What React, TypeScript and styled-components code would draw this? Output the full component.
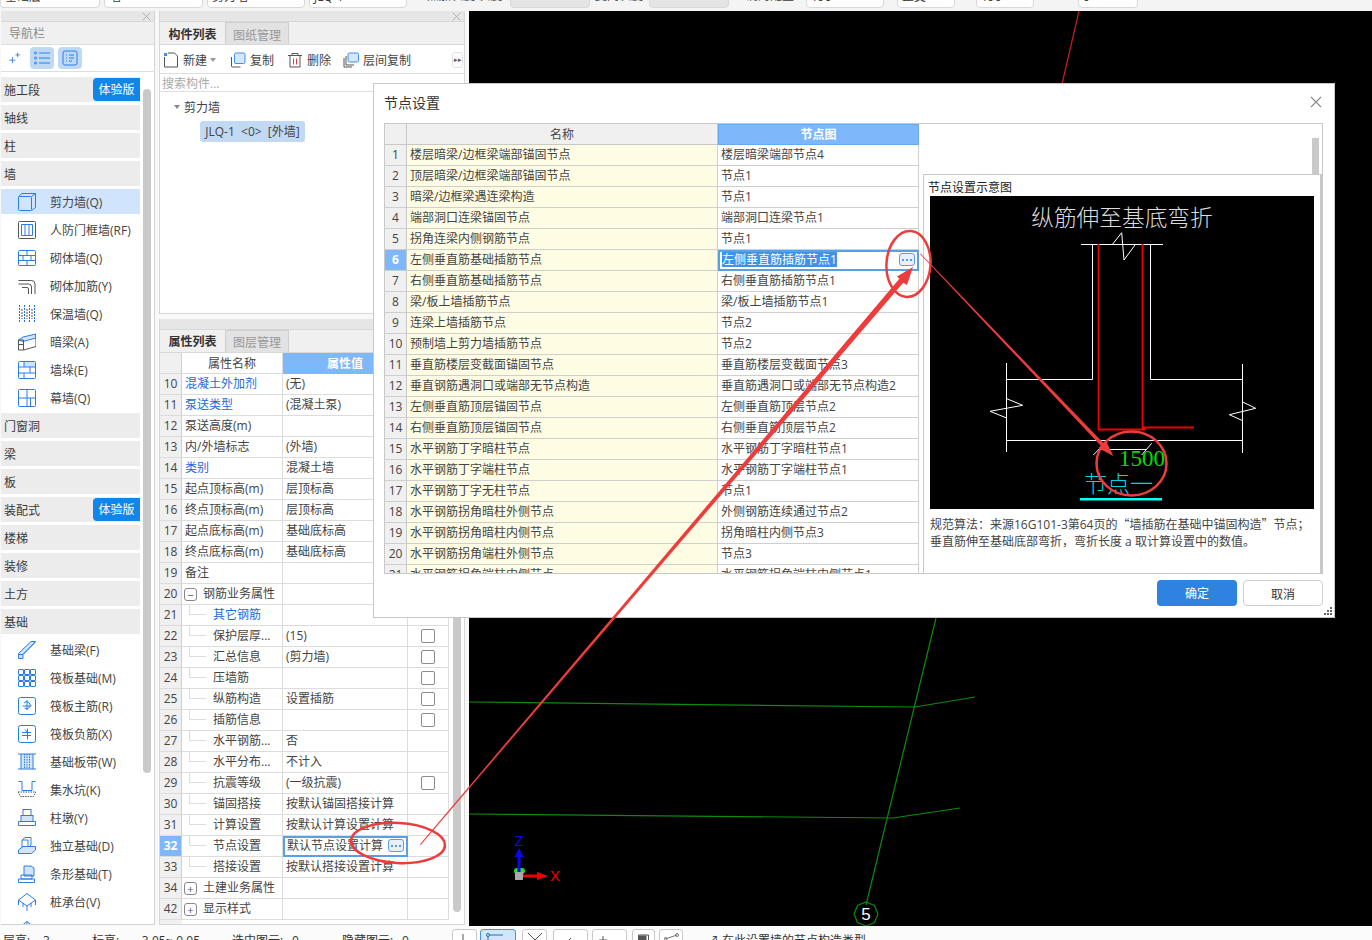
import React from "react";
import styled, { createGlobalStyle } from "styled-components";

const FONT = `"Open Sans","Noto Sans CJK SC",sans-serif`;
const BLUE = "#2a7de8";
const HEAD = "#7eb8fa";

const Global = createGlobalStyle`
  html, body { margin: 0; padding: 0; background: #f7f7f7; }
  * { box-sizing: border-box; }
  body { font-family: ${FONT}; font-size: 12px; color: #3a3a3a; }
`;

const Page = styled.div`
  position: relative; width: 1372px; height: 940px; overflow: hidden;
  display: flex; flex-direction: column; background: #f8f8f8;
`;

/* ---------- top bar ---------- */
const TopBar = styled.div`
  height: 11px; flex: none; overflow: hidden; display: flex; align-items: flex-end;
  gap: 4px; padding-bottom: 3px; background: #f4f4f4;
`;
const Field = styled.div<{ $w: number; $gray?: boolean; $ml?: number }>`
  flex: none; width: ${(p) => p.$w}px; height: 22px; margin-left: ${(p) => p.$ml ?? 0}px;
  border: 1px solid #d8d8d8; border-radius: 4px; background: ${(p) => (p.$gray ? "#e4e4e4" : "#fff")};
  padding: 0 4px; line-height: 20px; white-space: nowrap; overflow: hidden;
`;
const TopLabel = styled.div<{ $w: number; $ml?: number }>`
  flex: none; width: ${(p) => p.$w}px; height: 22px; line-height: 20px; margin-left: ${(p) => p.$ml ?? 0}px;
  white-space: nowrap; overflow: hidden;
`;

/* ---------- main ---------- */
const Main = styled.div`
  flex: none; height: 915px; display: flex; padding-left: 1px;
`;
const NavPanel = styled.div`
  flex: none; width: 154px; height: 914px; display: flex; flex-direction: column;
  background: #fff; border-right: 1px solid #d4d4d4; border-bottom: 1px solid #d4d4d4; overflow: hidden;
`;
const Grip = styled.div`
  flex: none; height: 11px; background: #e6e6e6; display: flex; justify-content: flex-end;
  align-items: center; padding-right: 3px; color: #a8a8a8; border-bottom: 1px solid #d8d8d8;
`;
const NavTitle = styled.div`
  flex: none; height: 22px; background: #f0f0f0; line-height: 24px; padding-left: 8px; color: #8a8a8a;
`;
const NavTools = styled.div`
  flex: none; height: 28px; display: flex; align-items: center; gap: 4px; padding-left: 7px;
  border-top: 1px solid #dedede; border-bottom: 1px solid #dedede;
`;
const ToolToggle = styled.div`
  width: 24px; height: 22px; border-radius: 4px; background: #bfd9f5;
  display: flex; align-items: center; justify-content: center;
`;
const NavBody = styled.div`
  flex: 1; min-height: 0; display: flex; padding-top: 5px;
`;
const NavList = styled.div`
  flex: none; width: 139px; display: flex; flex-direction: column; gap: 3px;
`;
const Section = styled.div`
  flex: none; height: 25px; background: #ececec; padding-left: 3px; line-height: 27px;
  display: flex; justify-content: space-between; color: #3a3a3a;
`;
const Trial = styled.div`
  width: 47px; height: 23px; margin-top: 1px; background: #0f86e8; color: #fff; text-align: center; line-height: 23px;
  border-radius: 4px 0 0 4px;
`;
const NavItem = styled.div<{ $on?: boolean }>`
  flex: none; height: 25px; display: flex; align-items: center; gap: 14px; padding-left: 17px;
  background: ${(p) => (p.$on ? "#d0e5fd" : "transparent")}; color: #444; white-space: nowrap;
`;
const NavThumb = styled.div`
  flex: none; width: 8px; height: 684px; margin: 12px 0 0 3px; background: #c9c9c9; border-radius: 4px;
`;

const Mid = styled.div`
  flex: none; width: 306px; margin-left: 4px; display: flex; flex-direction: column; gap: 5px;
`;
const MidPanel = styled.div<{ $h: number }>`
  flex: none; height: ${(p) => p.$h}px; display: flex; flex-direction: column; overflow: hidden;
  background: #fff; border: 1px solid #d8d8d8; border-top: none;
`;
const Tabs = styled.div`
  flex: none; height: 23px; display: flex; background: #f0f0f0; border-bottom: 1px solid #d8d8d8;
`;
const Tab = styled.div<{ $on?: boolean; $lh: number }>`
  width: ${(p) => (p.$on ? 65 : 64)}px; text-align: center; line-height: ${(p) => p.$lh}px;
  font-weight: ${(p) => (p.$on ? 700 : 400)}; color: ${(p) => (p.$on ? "#333" : "#999")};
  background: ${(p) => (p.$on ? "#f0f0f0" : "#e2e2e2")};
  border: ${(p) => (p.$on ? "none" : "1px solid #cfcfcf")}; border-bottom: none;
`;
const CompTools = styled.div`
  flex: none; height: 28px; display: flex; align-items: center; padding: 1px 0 0 3px; position: relative;
`;
const Tool = styled.div<{ $mr: number; $ml?: number }>`
  display: flex; align-items: center; gap: 4px; margin-right: ${(p) => p.$mr}px; margin-left: ${(p) => p.$ml ?? 0}px; color: #444;
`;
const Caret = styled.span`
  width: 0; height: 0; margin-left: 3px; border: 3px solid transparent; border-top: 4px solid #999; margin-top: 4px;
`;
const More = styled.div`
  margin-left: auto; margin-right: 1px; width: 11px; height: 16px; border: 1px solid #e2e2e2; border-radius: 3px;
  font-size: 7px; line-height: 14px; text-align: center; color: #555;
`;
const Search = styled.div`
  flex: none; height: 19px; border-top: 1px solid #dedede; border-bottom: 1px solid #dedede;
  padding-left: 2px; line-height: 20px; color: #aaa;
`;
const TreeHead = styled.div`
  display: flex; align-items: center; gap: 4px; padding: 2px 0 0 14px; height: 27px; color: #444;
`;
const TreeCaret = styled.span`
  width: 0; height: 0; border: 3px solid transparent; border-top: 4px solid #888; margin-top: 4px;
`;
const Chip = styled.div`
  align-self: flex-start; margin: 2px 0 0 40px; height: 21px; width: 105px; background: #c2d9f3; border-radius: 3px;
  line-height: 21px; text-align: center; color: #444; white-space: pre;
`;

/* ---------- property table ---------- */
const PropWrap = styled.div`
  flex: 1; min-height: 0; display: flex;
`;
const PropCol = styled.div`
  flex: none; width: 289px; display: flex; flex-direction: column;
`;
const PropRow = styled.div`
  flex: none; display: grid; grid-template-columns: 22px 101px 125px 41px; grid-auto-rows: 21px; height: 21px;
`;
const PCell = styled.div`
  border-right: 1px solid #dcdcdc; border-bottom: 1px solid #dcdcdc; line-height: 20px;
  padding-left: 3px; white-space: nowrap; overflow: hidden; color: #444; position: relative;
  display: flex; align-items: center;
`;
const Num = styled.div<{ $on?: boolean }>`
  border-right: 1px solid #cfcfcf; border-bottom: 1px solid #dcdcdc; line-height: 20px; text-align: center;
  background: ${(p) => (p.$on ? HEAD : "#f0f0f0")}; color: ${(p) => (p.$on ? "#fff" : "#444")};
  font-weight: ${(p) => (p.$on ? 700 : 400)};
`;
const NameText = styled.span<{ $link?: boolean; $indent?: number }>`
  color: ${(p) => (p.$link ? "#2468e0" : "#444")}; margin-left: ${(p) => p.$indent ?? 0}px;
`;
const Branch = styled.span`
  position: absolute; left: 7px; top: -1px; width: 17px; height: 11px;
  border-left: 1px solid #dddddd; border-bottom: 1px solid #dddddd;
`;
const Expander = styled.span`
  flex: none; width: 13px; height: 13px; border: 1px solid #888; border-radius: 3px; margin-left: -1px; margin-right: 6px;
  display: flex; align-items: center; justify-content: center; color: #555; font-size: 11px; line-height: 1;
`;
const HeadName = styled.div`
  border-right: 1px solid #dcdcdc; border-bottom: 1px solid #dcdcdc; text-align: center; line-height: 22px; color: #444; overflow: hidden;
`;
const HeadBlue = styled.div`
  background: ${HEAD}; color: #fff; font-weight: 700; text-align: center; line-height: 22px; border-right: 1px solid #6aa8f0; overflow: hidden;
`;
const Check = styled.span`
  width: 14px; height: 14px; border: 1px solid #8c8c8c; border-radius: 2px; margin: 0 auto; transform: translateX(-2px);
`;
const SelCell = styled.div`
  border: 2px solid #5a9ee6; line-height: 15px; padding: 0 2px 2px 2px; display: flex; align-items: center;
  justify-content: space-between; white-space: nowrap; overflow: hidden; color: #444;
`;
const DotsBtn = styled.span`
  flex: none; width: 16px; height: 13px; border: 1px solid #5a9ee6; border-radius: 3px; background: #e8f0fc;
  display: flex; align-items: center; justify-content: center; gap: 2px;
`;
const Dot = styled.i`
  display: block; width: 2px; height: 2px; background: #2a7de8; border-radius: 50%;
`;
const PropFill = styled.div`
  flex: 1; width: 22px; background: #f0f0f0;
`;
const PropThumb = styled.div`
  flex: none; width: 8px; height: 559px; margin-left: 4px; background: #c9c9c9; border-radius: 4px;
`;

/* ---------- canvas ---------- */
const Canvas = styled.div`
  flex: 1; margin-left: 4px; background: #000; position: relative;
`;
const CanvasSvg = styled.svg`
  position: absolute; inset: 0; width: 100%; height: 100%; display: block;
`;

/* ---------- status bar ---------- */
const Status = styled.div`
  flex: none; height: 14px; overflow: hidden; display: flex; align-items: flex-start; background: #fbfbfb;
`;
const StatText = styled.div<{ $w: number; $pl?: number; $ml?: number }>`
  flex: none; width: ${(p) => p.$w}px; padding: 5px 0 0 ${(p) => p.$pl ?? 0}px; margin-left: ${(p) => p.$ml ?? 0}px;
  line-height: 20px; white-space: nowrap; color: #333;
`;
const StatBtn = styled.div<{ $w: number; $on?: boolean; $ml: number }>`
  flex: none; width: ${(p) => p.$w}px; height: 22px; margin: 3px 0 0 ${(p) => p.$ml}px; padding: 2px 0 0 4px;
  border: 1px solid ${(p) => (p.$on ? "#4a90e2" : "#c8c8c8")}; border-radius: 3px 3px 0 0;
  background: ${(p) => (p.$on ? "#d2e5fc" : "#fff")};
`;

/* ---------- dialog ---------- */
const Dialog = styled.div`
  position: absolute; left: 373px; top: 83px; width: 962px; height: 535px; background: #fff;
  border: 1px solid #c8c8c8; display: flex; flex-direction: column;
`;
const DlgHead = styled.div`
  flex: none; height: 39px; display: flex; align-items: center; justify-content: space-between;
  padding: 0 12px 4px 10px; font-size: 14px; color: #333;
`;
const DlgBox = styled.div`
  flex: none; height: 451px; margin: 0 11px 0 10px; border: 1px solid #c8c8c8; display: flex; overflow: hidden;
`;
const DlgTable = styled.div`
  flex: none; width: 534px; display: flex; flex-direction: column;
`;
const DRow = styled.div`
  flex: none; display: grid; grid-template-columns: 22px 311px 201px; grid-auto-rows: 21px; height: 21px;
`;
const DHeadName = styled.div`
  background: #f0f0f0; border-right: 1px solid #c8c8c8; border-bottom: 1px solid #c8c8c8; text-align: center; line-height: 22px; color: #444; overflow: hidden;
`;
const DNum = styled.div<{ $on?: boolean }>`
  background: ${(p) => (p.$on ? HEAD : "#f0f0f0")}; color: ${(p) => (p.$on ? "#fff" : "#444")};
  font-weight: ${(p) => (p.$on ? 700 : 400)};
  border-right: 1px solid #c8c8c8; border-bottom: 1px solid #cfcfcf; text-align: center; line-height: 20px;
`;
const DName = styled.div`
  background: #fffce4; border-right: 1px solid #cfcfcf; border-bottom: 1px solid #cfcfcf; padding-left: 3px;
  line-height: 20px; white-space: nowrap; color: #444;
`;
const DNode = styled.div`
  border-right: 1px solid #cfcfcf; border-bottom: 1px solid #cfcfcf; padding-left: 3px;
  line-height: 20px; white-space: nowrap; color: #444;
`;
const SelText = styled.span`
  background: #3d93ea; color: #fff; line-height: 15px;
`;
const DHeadBlue = styled(HeadBlue)`
  border: 1px solid #6aa8f0; line-height: 20px;
`;
const Side = styled.div`
  flex: 1; display: flex; flex-direction: column; min-width: 0;
`;
const SideTop = styled.div`
  flex: none; height: 50px; display: flex; justify-content: flex-end; padding: 14px 3px 0 0;
`;
const SideThumb = styled.div`
  width: 7px; height: 36px; background: #c9c9c9;
`;
const Preview = styled.div`
  flex: 1; margin-left: 4px; border: 1px solid #c8c8c8; border-bottom: none; border-right-width: 2px; padding: 6px 0 0 6px;
`;
const PreviewTitle = styled.div`
  height: 15px; line-height: 14px; margin-left: -2px; color: #222;
`;
const Picture = styled.svg`
  display: block; width: 384px; height: 313px; background: #000;
`;
const Note = styled.div`
  margin-top: 6px; line-height: 17px; color: #444; white-space: pre; font-size: 12px;
`;
const Quote = styled.span`
  font-family: "Noto Sans CJK SC", sans-serif;
`;
const DlgFoot = styled.div`
  flex: 1; display: flex; justify-content: flex-end; gap: 6px; padding: 6px 11px 0 0; position: relative;
`;
const Btn = styled.div<{ $primary?: boolean }>`
  width: 80px; height: 26px; border-radius: 4px; text-align: center; line-height: 27px;
  background: ${(p) => (p.$primary ? "#2e83e2" : "#fff")}; color: ${(p) => (p.$primary ? "#fff" : "#333")};
  border: ${(p) => (p.$primary ? "none" : "1px solid #cfcfcf")};
`;
const Resize = styled.svg`
  position: absolute; right: 1px; bottom: 1px; width: 9px; height: 9px;
`;
const Marks = styled.svg`
  position: absolute; inset: 0; width: 1372px; height: 940px; pointer-events: none;
`;

/* ---------- icons ---------- */
const Ico = styled.svg`
  flex: none; width: 18px; height: 18px; display: block; fill: none; stroke: ${BLUE}; stroke-width: 1;
`;
const TI = styled.svg`
  flex: none; width: 16px; height: 16px; display: block; fill: none; stroke: #555; stroke-width: 1;
`;
const LIGHT = "#d2e4fb";
const GREY = "#555";

const raftCells = [0.5, 6.5, 12.5].flatMap((y) =>
  [0.5, 6.5, 12.5].map((x) => <rect key={`${x}-${y}`} x={x} y={y} width="5" height="5" rx="0.5" />)
);

const navIcons: Record<string, React.ReactNode> = {
  shear: (<><rect x="0.5" y="3.5" width="13" height="14" rx="1" /><path d="M.5 3.5 4 .5h13.500v14l-4 3M13.500 3.500l4-3" /></>),
  rf: (<><rect x="0.5" y="0.5" width="17" height="17" rx="1" stroke={GREY} /><path d="M3.500 3.500h11v11h-11zM7 3.500v11M11 3.500v11" /></>),
  brick: (<><rect x="0.5" y="1.5" width="17" height="15" rx="1" /><path d="M.5 6.500h17M.5 11.500h17M9 1.500v5M5 6.500v5M13 6.500v5M9 11.500v5" /></>),
  rebar: (<g stroke={GREY}><path d="M.5 3.500h13q3.500 0 3.500 3.500V17M.5 7h10q3 0 3 3v7M4 10.500h5q1.500 0 1.500 1.500v5" /></g>),
  insul: (<g strokeDasharray="2 1"><path d="M1.500 0v18M6.500 0v18M11.500 0v18M16.500 0v18" stroke="#1f6fdc" /><path d="M4 4v10M9 4v10M14 4v10" stroke={GREY} /></g>),
  hidden: (<><path d="M.5 7 5 4l13-3v4L5 8.500z" fill={LIGHT} /><path d="M.5 7h5v10h-5zM.5 11.500h5" stroke={GREY} /><path d="M5.500 17 18 13.500V1" stroke={GREY} /></>),
  pier: (<><rect x="0.5" y="0.5" width="17" height="17" rx="1" /><rect x="6" y="1" width="11" height="5" fill={LIGHT} stroke="none" /><path d="M.5 6h17M.5 12h17M6 .5V6M12 6v6M6 12v5.500" /></>),
  curtain: (<><rect x="0.5" y="0.5" width="17" height="17" rx="1" /><path d="M.5 9h17M9 .5V17.500M12.500 9v8.500" /></>),
  fbeam: (<><path d="M.5 12.500 13 .5l4.500 0L5 13.500v4H.5z" fill={LIGHT} /><path d="M.5 13.500H5L17.500 1" /></>),
  raft: <>{raftCells}</>,
  raftMain: (<><rect x="0.5" y="0.5" width="17" height="17" rx="2" /><path d="M9 3v10M4.500 9h9M6 6a3.500 3.500 0 1 1 .5 5" /></>),
  raftNeg: (<><rect x="0.5" y="0.5" width="17" height="17" rx="2" /><path d="M9.500 3.500v11M4 7.500h9M4 10.500h9M7 4.500l2.500 3" /></>),
  band: (<><rect x="3" y="1" width="12" height="15" fill={LIGHT} stroke="none" /><path d="M0 1h18M0 16h18M3 1v15M15 1v15" /><path d="M6.500 1v15M9 1v15M11.500 1v15" strokeDasharray="1.500 1" /></>),
  pit: (<><path d="M4 .5v9h10v-9M.5 .5h3.500M14 .5h3.500" /><path d="M0 11h18l-2.500 4.500h-13z" strokeDasharray="1.500 1" stroke={GREY} /></>),
  cap: (<><rect x="5" y="0.500" width="8" height="6" /><rect x="3" y="6.500" width="12" height="6" fill={LIGHT} /><path d="M.5 12.500h17v4H.5z" /></>),
  isolated: (<><path d="M4 3h6v8H4zM4 3l3-2.500h6V8l-3 3" /><path d="M.5 13 5 9.500h12.500V13l-4 3.500H.5z" fill={LIGHT} /></>),
  strip: (<><path d="M6 1h7l3 2v8H6z" fill={LIGHT} /><path d="M3 10h11v4H3zM.5 14h16v3.500H.5z" /></>),
  pile: (<><path d="M9 .5 17.500 7 9 13 .5 7zM.5 7v5M17.500 7v5M9 13v5M5 10v4M13 10v4" /></>),
  more: (<><path d="M9 .5 17.500 7 9 13 .5 7zM9 .5V13" /></>),
};

const nav: { t: string; i?: string; on?: boolean; trial?: boolean }[] = [
  { t: "施工段", trial: true }, { t: "轴线" }, { t: "柱" }, { t: "墙" },
  { t: "剪力墙(Q)", i: "shear", on: true }, { t: "人防门框墙(RF)", i: "rf" }, { t: "砌体墙(Q)", i: "brick" },
  { t: "砌体加筋(Y)", i: "rebar" }, { t: "保温墙(Q)", i: "insul" }, { t: "暗梁(A)", i: "hidden" },
  { t: "墙垛(E)", i: "pier" }, { t: "幕墙(Q)", i: "curtain" }, { t: "门窗洞" }, { t: "梁" }, { t: "板" },
  { t: "装配式", trial: true }, { t: "楼梯" }, { t: "装修" }, { t: "土方" }, { t: "基础" },
  { t: "基础梁(F)", i: "fbeam" }, { t: "筏板基础(M)", i: "raft" }, { t: "筏板主筋(R)", i: "raftMain" },
  { t: "筏板负筋(X)", i: "raftNeg" }, { t: "基础板带(W)", i: "band" }, { t: "集水坑(K)", i: "pit" },
  { t: "柱墩(Y)", i: "cap" }, { t: "独立基础(D)", i: "isolated" }, { t: "条形基础(T)", i: "strip" },
  { t: "桩承台(V)", i: "pile" }, { t: "桩(U)", i: "more" },
];

type P = { n: number; a: string; v?: string; link?: boolean; kind?: "child" | "open" | "closed"; check?: boolean; sel?: boolean };
const props: P[] = [
  { n: 10, a: "混凝土外加剂", v: "(无)", link: true },
  { n: 11, a: "泵送类型", v: "(混凝土泵)", link: true },
  { n: 12, a: "泵送高度(m)" },
  { n: 13, a: "内/外墙标志", v: "(外墙)" },
  { n: 14, a: "类别", v: "混凝土墙", link: true },
  { n: 15, a: "起点顶标高(m)", v: "层顶标高" },
  { n: 16, a: "终点顶标高(m)", v: "层顶标高" },
  { n: 17, a: "起点底标高(m)", v: "基础底标高" },
  { n: 18, a: "终点底标高(m)", v: "基础底标高" },
  { n: 19, a: "备注" },
  { n: 20, a: "钢筋业务属性", kind: "open" },
  { n: 21, a: "其它钢筋", kind: "child", link: true },
  { n: 22, a: "保护层厚...", v: "(15)", kind: "child", check: true },
  { n: 23, a: "汇总信息", v: "(剪力墙)", kind: "child", check: true },
  { n: 24, a: "压墙筋", kind: "child", check: true },
  { n: 25, a: "纵筋构造", v: "设置插筋", kind: "child", check: true },
  { n: 26, a: "插筋信息", kind: "child", check: true },
  { n: 27, a: "水平钢筋...", v: "否", kind: "child" },
  { n: 28, a: "水平分布...", v: "不计入", kind: "child" },
  { n: 29, a: "抗震等级", v: "(一级抗震)", kind: "child", check: true },
  { n: 30, a: "锚固搭接", v: "按默认锚固搭接计算", kind: "child" },
  { n: 31, a: "计算设置", v: "按默认计算设置计算", kind: "child" },
  { n: 32, a: "节点设置", v: "默认节点设置计算", kind: "child", sel: true },
  { n: 33, a: "搭接设置", v: "按默认搭接设置计算", kind: "child" },
  { n: 34, a: "土建业务属性", kind: "closed" },
  { n: 42, a: "显示样式", kind: "closed" },
];

const nodes: [string, string][] = [
  ["楼层暗梁/边框梁端部锚固节点", "楼层暗梁端部节点4"],
  ["顶层暗梁/边框梁端部锚固节点", "节点1"],
  ["暗梁/边框梁遇连梁构造", "节点1"],
  ["端部洞口连梁锚固节点", "端部洞口连梁节点1"],
  ["拐角连梁内侧钢筋节点", "节点1"],
  ["左侧垂直筋基础插筋节点", "左侧垂直筋插筋节点1"],
  ["右侧垂直筋基础插筋节点", "右侧垂直筋插筋节点1"],
  ["梁/板上墙插筋节点", "梁/板上墙插筋节点1"],
  ["连梁上墙插筋节点", "节点2"],
  ["预制墙上剪力墙插筋节点", "节点2"],
  ["垂直筋楼层变截面锚固节点", "垂直筋楼层变截面节点3"],
  ["垂直钢筋遇洞口或端部无节点构造", "垂直筋遇洞口或端部无节点构造2"],
  ["左侧垂直筋顶层锚固节点", "左侧垂直筋顶层节点2"],
  ["右侧垂直筋顶层锚固节点", "右侧垂直筋顶层节点2"],
  ["水平钢筋丁字暗柱节点", "水平钢筋丁字暗柱节点1"],
  ["水平钢筋丁字端柱节点", "水平钢筋丁字端柱节点1"],
  ["水平钢筋丁字无柱节点", "节点1"],
  ["水平钢筋拐角暗柱外侧节点", "外侧钢筋连续通过节点2"],
  ["水平钢筋拐角暗柱内侧节点", "拐角暗柱内侧节点3"],
  ["水平钢筋拐角端柱外侧节点", "节点3"],
  ["水平钢筋拐角端柱内侧节点", "水平钢筋拐角端柱内侧节点1"],
];

const Dots = () => (
  <DotsBtn>
    <Dot />
    <Dot />
    <Dot />
  </DotsBtn>
);

const Close = ({ size, color }: { size: number; color: string }) => (
  <svg width={size} height={size} viewBox="0 0 12 12" fill="none" stroke={color} strokeWidth="1.1">
    <path d="M1 1l10 10M11 1 1 11" />
  </svg>
);

function PropLine({ p }: { p: P }) {
  const name =
    p.kind === "child" ? (
      <PCell>
        <Branch />
        <NameText $link={p.link} $indent={28}>{p.a}</NameText>
      </PCell>
    ) : p.kind === "open" || p.kind === "closed" ? (
      <PCell>
        <Expander>{p.kind === "open" ? "−" : "+"}</Expander>
        <NameText>{p.a}</NameText>
      </PCell>
    ) : (
      <PCell>
        <NameText $link={p.link}>{p.a}</NameText>
      </PCell>
    );
  return (
    <PropRow>
      <Num $on={p.sel}>{p.n}</Num>
      {name}
      {p.sel ? (
        <SelCell>
          {p.v}
          <Dots />
        </SelCell>
      ) : (
        <PCell>{p.v}</PCell>
      )}
      <PCell>{p.check && <Check />}</PCell>
    </PropRow>
  );
}

export default function App() {
  return (
    <Page>
      <Global />
      <TopBar>
        <Field $w={100}>基础层</Field>
        <Field $w={99}>墙</Field>
        <Field $w={98}>剪力墙</Field>
        <Field $w={98}>JLQ-1</Field>
        <TopLabel $w={94} $ml={1}>□ 点加长度 长度:</TopLabel>
        <Field $w={80} $gray />
        <TopLabel $w={50} $ml={1}>复同长度:</TopLabel>
        <Field $w={80} $gray />
        <TopLabel $w={68} $ml={1}>正确的配置:</TopLabel>
        <Field $w={78}>190</Field>
        <Field $w={58} $ml={9}>正交</Field>
        <TopLabel $w={12}>x</TopLabel>
        <Field $w={58} $ml={1}>190</Field>
        <TopLabel $w={36}>mm</TopLabel>
        <Field $w={60}>0</Field>
        <TopLabel $w={30}>mm</TopLabel>
      </TopBar>

      <Main>
        <NavPanel>
          <Grip><Close size={9} color="#a8a8a8" /></Grip>
          <NavTitle>导航栏</NavTitle>
          <NavTools>
            <svg width="14" height="14" viewBox="0 0 16 16" fill="none" stroke={BLUE} strokeWidth="1" style={{ marginRight: 4 }}>
              <path d="M5 7v7M1.500 10.500h7M11 2v5M8.500 4.500h5" />
            </svg>
            <ToolToggle>
              <svg width="16" height="14" viewBox="0 0 16 14" fill="none" stroke={BLUE}>
                <path d="M5 2h11M5 7h11M5 12h11" />
                <circle cx="1.500" cy="2" r="1" /><circle cx="1.500" cy="7" r="1" /><circle cx="1.500" cy="12" r="1" />
              </svg>
            </ToolToggle>
            <ToolToggle>
              <svg width="16" height="16" viewBox="0 0 16 16" fill="none" stroke={BLUE}>
                <rect x="1" y="1" width="14" height="14" rx="2" />
                <path d="M4 5h1M7 5h5M4 8h1M7 8h5M4 11h1M7 11h3" />
              </svg>
            </ToolToggle>
          </NavTools>
          <NavBody>
            <NavList>
              {nav.map((n) =>
                n.i ? (
                  <NavItem key={n.t} $on={n.on}>
                    <Ico viewBox="0 0 18 18">{navIcons[n.i]}</Ico>
                    <span>{n.t}</span>
                  </NavItem>
                ) : (
                  <Section key={n.t}>
                    <span>{n.t}</span>
                    {n.trial && <Trial>体验版</Trial>}
                  </Section>
                )
              )}
            </NavList>
            <NavThumb />
          </NavBody>
        </NavPanel>

        <Mid>
          <MidPanel $h={303}>
            <Grip><Close size={9} color="#a8a8a8" /></Grip>
            <Tabs>
              <Tab $on $lh={25}>构件列表</Tab>
              <Tab $lh={25}>图纸管理</Tab>
            </Tabs>
            <CompTools>
              <Tool $mr={0}>
                <TI viewBox="0 0 16 16">
                  <path d="M1.500 5v10h13V4l-3-3H5" />
                  <path d="M1 1h3v3H1z" fill="#3f8fef" stroke="none" />
                </TI>
                <span>新建</span>
              </Tool>
              <Caret />
              <Tool $mr={13} $ml={14}>
                <TI viewBox="0 0 16 16">
                  <path d="M1.500 5v9a1 1 0 0 0 1 1h8" />
                  <rect x="4.500" y="1" width="10.500" height="10.500" rx="1.500" fill="#d6e7fb" stroke="#3f8fef" />
                </TI>
                <span>复制</span>
              </Tool>
              <Tool $mr={12}>
                <TI viewBox="0 0 16 16">
                  <path d="M1 3.500h14M5 3.500V1.500h6v2M3 3.500V15h10V3.500" />
                  <path d="M6.500 6.500v6M9.500 6.500v6" stroke="#e23a3a" />
                </TI>
                <span>删除</span>
              </Tool>
              <Tool $mr={0}>
                <TI viewBox="0 0 16 16">
                  <path d="M1 6v9h8M3 4v9h8" />
                  <rect x="5" y="1" width="10.500" height="9" rx="1.500" fill="#d6e7fb" stroke="#3f8fef" />
                </TI>
                <span>层间复制</span>
              </Tool>
              <More>▸▸</More>
            </CompTools>
            <Search>搜索构件...</Search>
            <TreeHead><TreeCaret />剪力墙</TreeHead>
            <Chip>{"JLQ-1  <0>  [外墙]"}</Chip>
          </MidPanel>

          <MidPanel $h={606}>
            <Grip />
            <Tabs>
              <Tab $on $lh={23}>属性列表</Tab>
              <Tab $lh={23}>图层管理</Tab>
            </Tabs>
            <PropWrap>
              <PropCol>
                <PropRow>
                  <Num />
                  <HeadName>属性名称</HeadName>
                  <HeadBlue>属性值</HeadBlue>
                  <HeadName />
                </PropRow>
                {props.map((p) => (
                  <PropLine key={p.n} p={p} />
                ))}
                <PropFill />
              </PropCol>
              <PropThumb />
            </PropWrap>
          </MidPanel>
        </Mid>

        <Canvas>
          <CanvasSvg viewBox="469 11 903 915" fill="none">
            <path d="M1079 11 1062 84" stroke="#c81e1e" strokeWidth="1.200" />
            <g stroke="#0e8a0e" strokeWidth="1.200">
              <path d="M469 702 915 707M915 707 975 697" />
              <path d="M469 814 893 818M893 818 960 808" />
              <path d="M936 618 866 905" />
              <path d="M866 902l8.500 3.500 3.500 8.500-3.500 8.500-8.500 3.500-8.500-3.500-3.500-8.500 3.500-8.500z" />
            </g>
            <text x="866" y="920" fill="#fff" fontSize="17" textAnchor="middle" fontFamily="Liberation Sans, sans-serif">5</text>
            <rect x="514" y="868" width="11" height="6" rx="3" fill="#22e022" />
            <path d="M517.500 873v-16h-3l4.500-9 4.500 9h-3v16z" fill="#0808f0" />
            <path d="M523 874.500h14V872l11 4-11 4v-2.500h-14z" fill="#f00000" />
            <rect x="515" y="872" width="8" height="8" fill="#aaa" />
            <text x="519" y="846" fill="#0808f0" fontSize="15" textAnchor="middle" fontFamily="Liberation Sans, sans-serif">Z</text>
            <text x="555" y="881" fill="#f00000" fontSize="15" textAnchor="middle" fontFamily="Liberation Sans, sans-serif">X</text>
          </CanvasSvg>
        </Canvas>
      </Main>

      <Status>
        <StatText $w={43} $pl={3}>层高:</StatText>
        <StatText $w={49}>3</StatText>
        <StatText $w={46}>标高:</StatText>
        <StatText $w={94}>-3.05~-0.05</StatText>
        <StatText $w={60}>选中图元:</StatText>
        <StatText $w={50}>0</StatText>
        <StatText $w={60}>隐藏图元:</StatText>
        <StatText $w={50}>0</StatText>
        <StatBtn $w={25} $ml={0}>
          <svg width="14" height="14" fill="none" stroke="#555"><path d="M6 2v12" /></svg>
        </StatBtn>
        <StatBtn $w={36} $ml={3} $on>
          <svg width="20" height="14" fill="none" stroke="#3464a8"><path d="M3 3h15M3 3v11" /><circle cx="3" cy="3" r="1.500" fill="#d2e5fc" /></svg>
        </StatBtn>
        <StatBtn $w={25} $ml={6}>
          <svg width="16" height="14" fill="none" stroke="#555"><path d="M1 1l7 7 7-7" /></svg>
        </StatBtn>
        <StatBtn $w={35} $ml={6}>
          <svg width="20" height="14" fill="none" stroke="#555"><path d="M8 11l5-5" /></svg>
        </StatBtn>
        <StatBtn $w={35} $ml={4}>
          <svg width="14" height="14" fill="none" stroke="#555"><path d="M2 8h8M6 4v8" /></svg>
        </StatBtn>
        <StatBtn $w={23} $ml={5}>
          <svg width="14" height="14" fill="none" stroke="#555"><path d="M1.500 3h10v10h-10z" /><rect x="2" y="4" width="7" height="9" fill="#555" /></svg>
        </StatBtn>
        <StatBtn $w={24} $ml={4}>
          <svg width="16" height="14" fill="none" stroke="#777"><path d="M1 7l12-4" /><circle cx="13" cy="3" r="1.500" /><circle cx="1.500" cy="7" r="1.500" /></svg>
        </StatBtn>
        <StatText $w={200} $ml={24}>↗ 在此设置墙的节点构造类型</StatText>
      </Status>

      <Dialog>
        <DlgHead>
          <span>节点设置</span>
          <Close size={12} color="#8a8a8a" />
        </DlgHead>
        <DlgBox>
          <DlgTable>
            <DRow>
              <DHeadName />
              <DHeadName>名称</DHeadName>
              <DHeadBlue>节点图</DHeadBlue>
            </DRow>
            {nodes.map(([a, b], i) => (
              <DRow key={a}>
                <DNum $on={i === 5}>{i + 1}</DNum>
                <DName>{a}</DName>
                {i === 5 ? (
                  <SelCell>
                    <SelText>{b}</SelText>
                    <Dots />
                  </SelCell>
                ) : (
                  <DNode>{b}</DNode>
                )}
              </DRow>
            ))}
          </DlgTable>
          <Side>
            <SideTop><SideThumb /></SideTop>
            <Preview>
              <PreviewTitle>节点设置示意图</PreviewTitle>
              <Picture viewBox="0 0 384 313" fill="none">
                <text x="192" y="30" fill="#dcdcdc" fontSize="22.700" fontWeight="300" textAnchor="middle" fontFamily="Noto Sans CJK SC, sans-serif">纵筋伸至基底弯折</text>
                <g stroke="#fff" strokeWidth="1">
                  <path d="M151 48.500h82M162.500 48.500v135H76.500M76.500 167v89M220.500 48.500v135h92M312.500 168v89M76.500 244.500h236" />
                  <path d="M182.700 48 191.700 36.700 194 64 205 49" />
                  <path d="M76.700 202.700 92.700 209.300 60 215.300 76.700 222" />
                  <path d="M312.700 206 325.700 212.300 299.300 218.700 312.700 224.700" />
                  <path d="M168 253.500h48.700M163.300 259 175 247.300M211.700 259l10-11.700" />
                </g>
                <g stroke="#f00000" strokeWidth="1.800">
                  <path d="M168.500 48v185.500h47M212.500 48v183.500H264" />
                </g>
                <text x="189" y="270" fill="#00dc00" fontSize="23" fontFamily="Liberation Serif, serif">1500</text>
                <text x="154" y="296" fill="#00d8e0" fontSize="23" fontWeight="300" fontFamily="Noto Sans CJK SC, sans-serif">节点一</text>
                <rect x="150" y="302" width="82" height="2.500" fill="#00ffff" />
              </Picture>
              <Note>
                规范算法：来源16G101-3第64页的<Quote>“</Quote>墙插筋在基础中锚固构造<Quote>”</Quote>节点；{"\n"}
                垂直筋伸至基础底部弯折，弯折长度 a 取计算设置中的数值。
              </Note>
            </Preview>
          </Side>
        </DlgBox>
        <DlgFoot>
          <Btn $primary>确定</Btn>
          <Btn>取消</Btn>
          <Resize viewBox="0 0 9 9" fill="#666">
            <rect x="6" y="0" width="2" height="2" />
            <rect x="3" y="3" width="2" height="2" /><rect x="6" y="3" width="2" height="2" />
            <rect x="0" y="6" width="2" height="2" /><rect x="3" y="6" width="2" height="2" /><rect x="6" y="6" width="2" height="2" />
          </Resize>
        </DlgFoot>
      </Dialog>

      <Marks viewBox="0 0 1372 940" fill="none">
        <polygon fill="#ee3b3b" points="420,844.300 899.400,278.700 897,276.500 913,267 907,285 903.200,282.700 420.700,845" />
        <polygon fill="#ee3b3b" points="920,254 1100.800,445.700 1098.400,448 1113.300,456 1106,440.800 1103.400,443.100 920.600,253.500" />
        <g stroke="#ee3b3b" strokeWidth="2.500">
          <ellipse cx="398" cy="843" rx="47" ry="20" transform="rotate(3 398 843)" />
          <ellipse cx="908.500" cy="264" rx="22" ry="33" transform="rotate(4 908.500 264)" />
          <ellipse cx="1131.500" cy="463.500" rx="35" ry="32" />
        </g>
      </Marks>
    </Page>
  );
}
